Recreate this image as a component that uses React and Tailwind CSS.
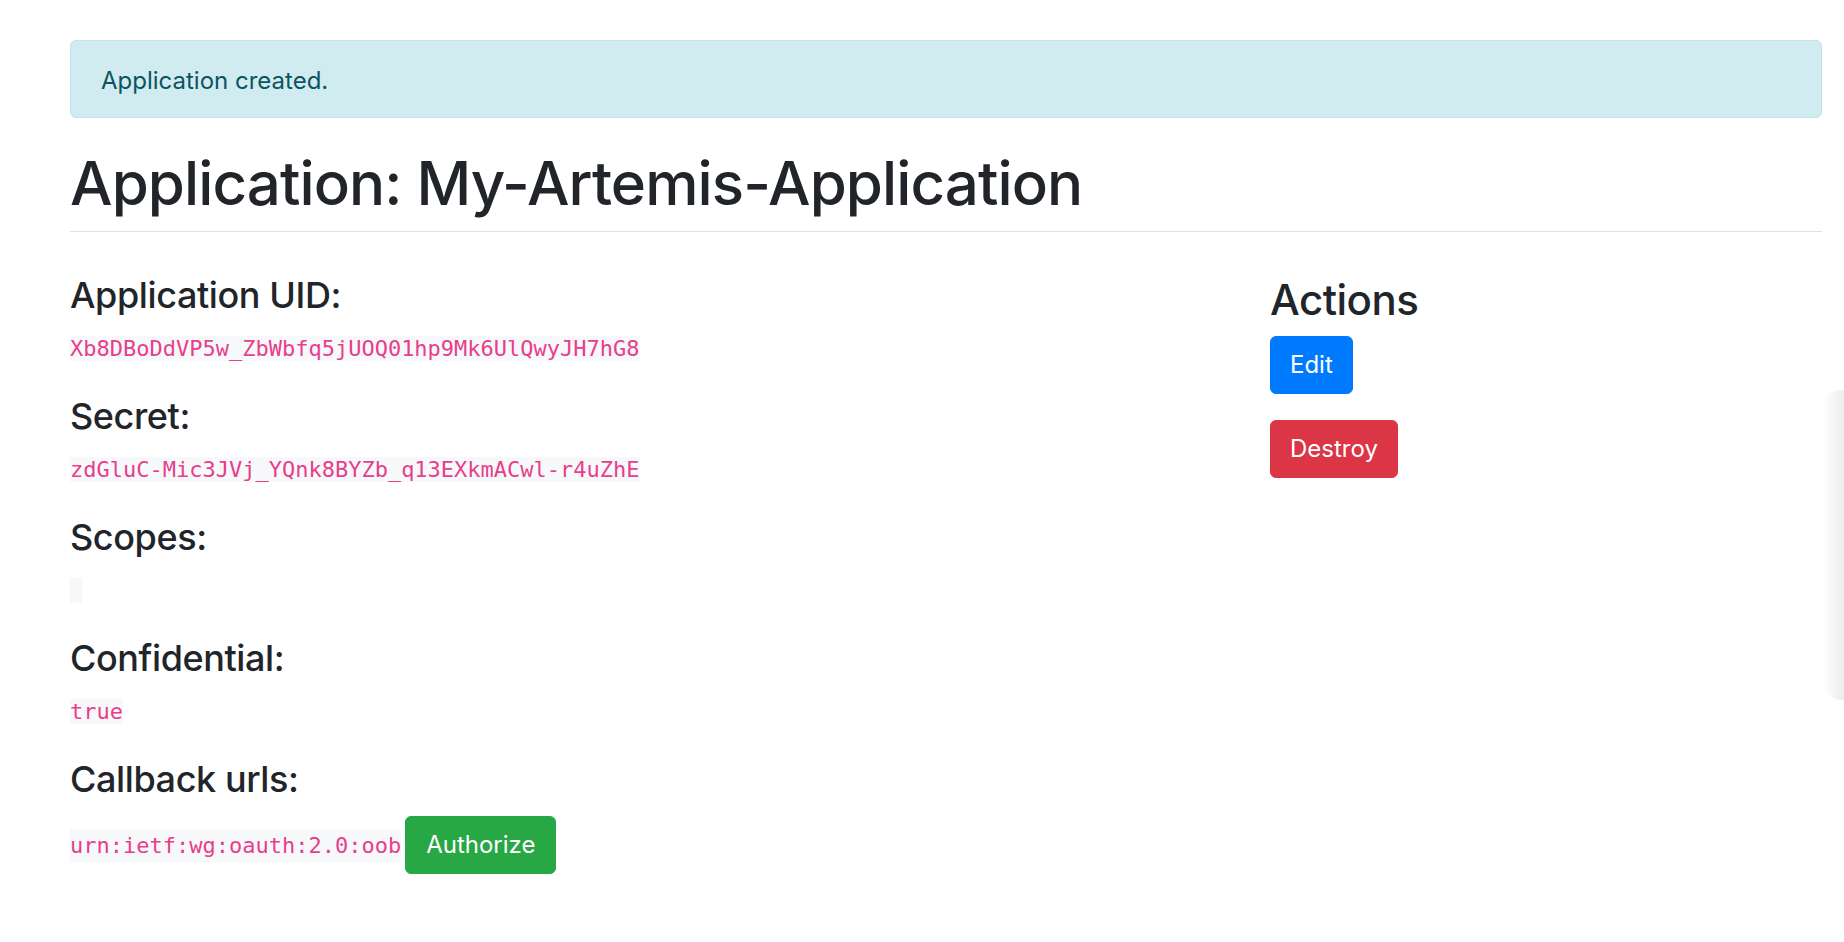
export default function App() {
  const fields = [
    { label: "Application UID:", value: "Xb8DBoDdVP5w_ZbWbfq5jUOQ01hp9Mk6UlQwyJH7hG8" },
    { label: "Secret:", value: "zdGluC-Mic3JVj_YQnk8BYZb_q13EXkmACwl-r4uZhE" },
    { label: "Scopes:", value: "" },
    { label: "Confidential:", value: "true" },
  ];

  return (
    <div className="relative min-h-screen bg-white pl-[70px] pr-[22px] pt-[40px] font-['Inter','Liberation_Sans',sans-serif] text-[#212529]">
      <div className="mb-[29px] rounded-[6px] border border-[#bee5eb] bg-[#d1ecf1] px-[30px] pt-[22px] pb-[18px] text-[24px] leading-[36px] text-[#0c5460]">
        Application created.
      </div>

      <h1 className="mb-[41px] border-b border-[#dee2e6] pb-[12px] text-[60px] font-medium leading-[72px] tracking-[-0.9px]">
        Application: My-Artemis-Application
      </h1>

      <div className="flex">
        <div className="w-[1200px]">
          {fields.map((f) => (
            <div key={f.label}>
              <h4 className="mb-[12px] text-[36px] font-medium leading-[44px] tracking-[-0.4px]">{f.label}</h4>
              <p className="mb-[24px] leading-[40px]">
                <code className="bg-[#f7f8fa] font-['DejaVu_Sans_Mono',monospace] text-[22px] text-[#e83e8c]">
                  {f.value || <span className="inline-block w-[12px]">&nbsp;</span>}
                </code>
              </p>
            </div>
          ))}
          <h4 className="text-[36px] font-medium leading-[44px] tracking-[-0.4px]">Callback urls:</h4>
          <div className="mt-[15px] flex items-baseline gap-[4px]">
            <code className="bg-[#f7f8fa] font-['DejaVu_Sans_Mono',monospace] text-[22px] text-[#e83e8c]">
              urn:ietf:wg:oauth:2.0:oob
            </code>
            <button className="rounded-[6px] border border-[#28a745] bg-[#28a745] px-[20px] py-[10px] text-[24px] leading-[36px] text-white">
              Authorize
            </button>
          </div>
        </div>

        <div className="mt-[2px] flex-1">
          <h3 className="mb-[11px] text-[42px] font-medium leading-[50px] tracking-[-0.5px]">Actions</h3>
          <div className="mb-[26px]">
            <button className="rounded-[6px] border border-[#007bff] bg-[#007bff] px-[19px] py-[10px] text-[24px] leading-[36px] text-white">
              Edit
            </button>
          </div>
          <div>
            <button className="rounded-[6px] border border-[#dc3545] bg-[#dc3545] px-[19px] py-[10px] text-[24px] leading-[36px] text-white">
              Destroy
            </button>
          </div>
        </div>
      </div>

      <div className="pointer-events-none absolute right-0 top-[390px] h-[310px] w-[22px] rounded-l-[20px] bg-gradient-to-l from-[#ededed] to-white" />
    </div>
  );
}
